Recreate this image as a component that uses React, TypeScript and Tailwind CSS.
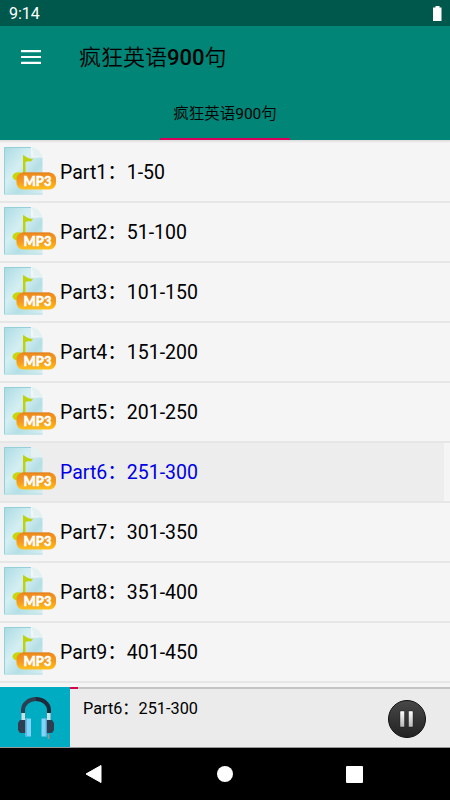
import clsx from "clsx";

interface Track {
  name: string;
  range: string;
}

const tracks: Track[] = [
  { name: "Part1", range: "1-50" },
  { name: "Part2", range: "51-100" },
  { name: "Part3", range: "101-150" },
  { name: "Part4", range: "151-200" },
  { name: "Part5", range: "201-250" },
  { name: "Part6", range: "251-300" },
  { name: "Part7", range: "301-350" },
  { name: "Part8", range: "351-400" },
  { name: "Part9", range: "401-450" },
];

const current = tracks[5];

function Mp3Icon() {
  return (
    <svg width="56" height="50" viewBox="0 0 56 50" className="mb-[2px] shrink-0">
      <defs>
        <linearGradient id="page" x1="0" y1="0" x2="1" y2="1">
          <stop offset="0" stopColor="#a9dbe2" />
          <stop offset="0.4" stopColor="#d5eff3" />
          <stop offset="0.65" stopColor="#b4dfe5" />
          <stop offset="1" stopColor="#d8eef1" />
        </linearGradient>
        <linearGradient id="badge" x1="0" y1="0" x2="0" y2="1">
          <stop offset="0" stopColor="#ee8a20" />
          <stop offset="0.55" stopColor="#f69a1a" />
          <stop offset="1" stopColor="#ffc21c" />
        </linearGradient>
      </defs>
      <path d="M4 1h27v10.500h11.500v37H4z" fill="url(#page)" />
      <path d="M4.500 48.500V1.500H31" fill="none" stroke="#94d0da" />
      <path d="M4 48h38.500" stroke="#b6e0e6" />
      <path d="M31 1c6 1 11 5 11.500 11-3-2-6-2-9-1.500C33 7 33 4 31 1z" fill="#e3f1f3" />
      <path d="M23 9l2 1c2 2 5 3 8 3l-2 2.500c-2-.5-4-.5-5.500 .5V28H23z" fill="#bfd20e" />
      <ellipse cx="18.500" cy="30.500" rx="6" ry="4.200" fill="#c6d80c" />
      <rect x="16.500" y="26.500" width="39.500" height="17" rx="6.500" fill="url(#badge)" />
      <path d="M22 27h28" stroke="#d97b1c" strokeOpacity="0.6" />
      <text
        x="37.500"
        y="40"
        textAnchor="middle"
        textLength="28"
        lengthAdjust="spacingAndGlyphs"
        fontFamily="Lato, sans-serif"
        fontSize="14"
        fontWeight="900"
        fill="#fff"
        stroke="#fff"
        strokeWidth="0.500"
      >
        MP3
      </text>
    </svg>
  );
}

function HeadphonesIcon() {
  return (
    <svg width="70" height="60" viewBox="0 0 70 60">
      <path d="M23 26v-3a13 11 0 0 1 13-11" fill="none" stroke="#2c3e50" strokeWidth="4" />
      <path d="M36 12a13 11 0 0 1 13 11v3" fill="none" stroke="#1d2a3a" strokeWidth="4" />
      <path d="M21.500 26h3.500v8h-3.500zM47 26h3.500v8H47z" fill="#d5dce0" />
      <path d="M26 33h-6l-2 3v7l2 3h6zM46 33h6l2 3v7l-2 3h-6z" fill="#2c3e50" />
      <path d="M25.500 31.500h5.500v18h-5.500zM41.500 31.500h5v18h-5z" fill="#82d3f8" />
      <path d="M25.500 31.500h1.500v18h-1.500zM45.500 31.500h1v18h-1z" fill="#5bb8e8" />
      <path d="M48.500 47v5" stroke="#b98a83" strokeWidth="1.500" />
    </svg>
  );
}

function PauseIcon() {
  return (
    <svg width="40" height="40" viewBox="0 0 40 40">
      <defs>
        <linearGradient id="disc" x1="0" y1="0" x2="0" y2="1">
          <stop offset="0" stopColor="#484848" />
          <stop offset="1" stopColor="#222" />
        </linearGradient>
        <linearGradient id="bars" x1="0" y1="0" x2="0" y2="1">
          <stop offset="0" stopColor="#fff" />
          <stop offset="1" stopColor="#b5b5b5" />
        </linearGradient>
      </defs>
      <circle cx="20" cy="20" r="18.500" fill="url(#disc)" stroke="#101010" />
      <rect x="13" y="12" width="4.500" height="16" rx="0.800" fill="url(#bars)" stroke="#151515" strokeWidth="0.400" />
      <rect x="21.500" y="12" width="4.500" height="16" rx="0.800" fill="url(#bars)" stroke="#151515" strokeWidth="0.400" />
    </svg>
  );
}

function TrackRow({ track, active }: { track: Track; active: boolean }) {
  return (
    <li className="h-[60px] shrink-0 border-b-2 border-[#e6e6e6]">
      <div className={clsx("flex h-full items-center", active && "mr-[6px] bg-[#ededed] text-[#0000e6]")}>
        <Mp3Icon />
        <span className="ml-1 pt-[2px] text-[19.500px] leading-6">
          {track.name}：{track.range}
        </span>
      </div>
    </li>
  );
}

export default function App() {
  return (
    <div className="flex h-[800px] w-[450px] flex-col overflow-hidden bg-[#f5f5f5] font-[Roboto,'Noto_Sans_CJK_SC',sans-serif] text-black">
      <div className="flex h-[26px] shrink-0 items-center justify-between bg-[#00574b] pl-[9px] pr-2 text-white">
        <span className="pt-[2px] text-[16px] leading-5">9:14</span>
        <svg width="9" height="15" viewBox="0 0 9 15">
          <path d="M2.500 0h4v1.500h2V15H0V1.500h2.500z" fill="#fff" />
        </svg>
      </div>

      <header className="flex h-[114px] shrink-0 flex-col bg-[#008577]">
        <div className="flex h-[62px] items-center pl-[21px]">
          <svg width="20" height="14" viewBox="0 0 20 14">
            <path d="M0 1.200h20M0 7h20M0 12.800h20" stroke="#fff" strokeWidth="2.200" />
          </svg>
          <h1 className="ml-[38px] pt-[2px] text-[22px] leading-7 font-[350]">
            疯狂英语<span className="font-medium">900</span>句
          </h1>
        </div>
        <div className="flex flex-1 justify-center">
          <div className="flex w-[130px] items-center justify-center border-b-2 border-[#d8005a] pt-1 text-[15.500px] font-[350]">
            <span>疯狂英语<span className="font-normal">900</span>句</span>
          </div>
        </div>
      </header>

      <div className="h-[3px] shrink-0 bg-linear-to-b from-[#dadada] to-[#f5f5f5]" />
      <ul className="flex min-h-0 flex-1 flex-col overflow-hidden">
        {tracks.map((track) => (
          <TrackRow key={track.name} track={track} active={track === current} />
        ))}
      </ul>

      <footer className="flex h-[61px] shrink-0 border-b border-[#999] bg-[#ebebeb]">
        <div className="w-[70px] bg-[#00acc1]">
          <HeadphonesIcon />
        </div>
        <div className="flex flex-1 flex-col">
          <div className="h-[2px] bg-[#c4c4c4]">
            <div className="h-full w-2 bg-[#d8004a]" />
          </div>
          <div className="flex flex-1 items-start justify-between pl-[13px] pr-[23px]">
            <span className="pt-2 text-[16.250px] leading-6">
              {current.name}：{current.range}
            </span>
            <div className="pt-[10px]">
              <PauseIcon />
            </div>
          </div>
        </div>
      </footer>

      <nav className="flex h-[52px] shrink-0 items-center bg-black pl-[85px]">
        <svg width="17" height="18" viewBox="0 0 17 18">
          <path d="M16 .500v17L1 9z" fill="#fff" stroke="#fff" strokeLinejoin="round" />
        </svg>
        <div className="ml-[115px] size-4 rounded-full bg-white" />
        <div className="ml-[113px] size-[17px] rounded-[1px] bg-white" />
      </nav>
    </div>
  );
}
